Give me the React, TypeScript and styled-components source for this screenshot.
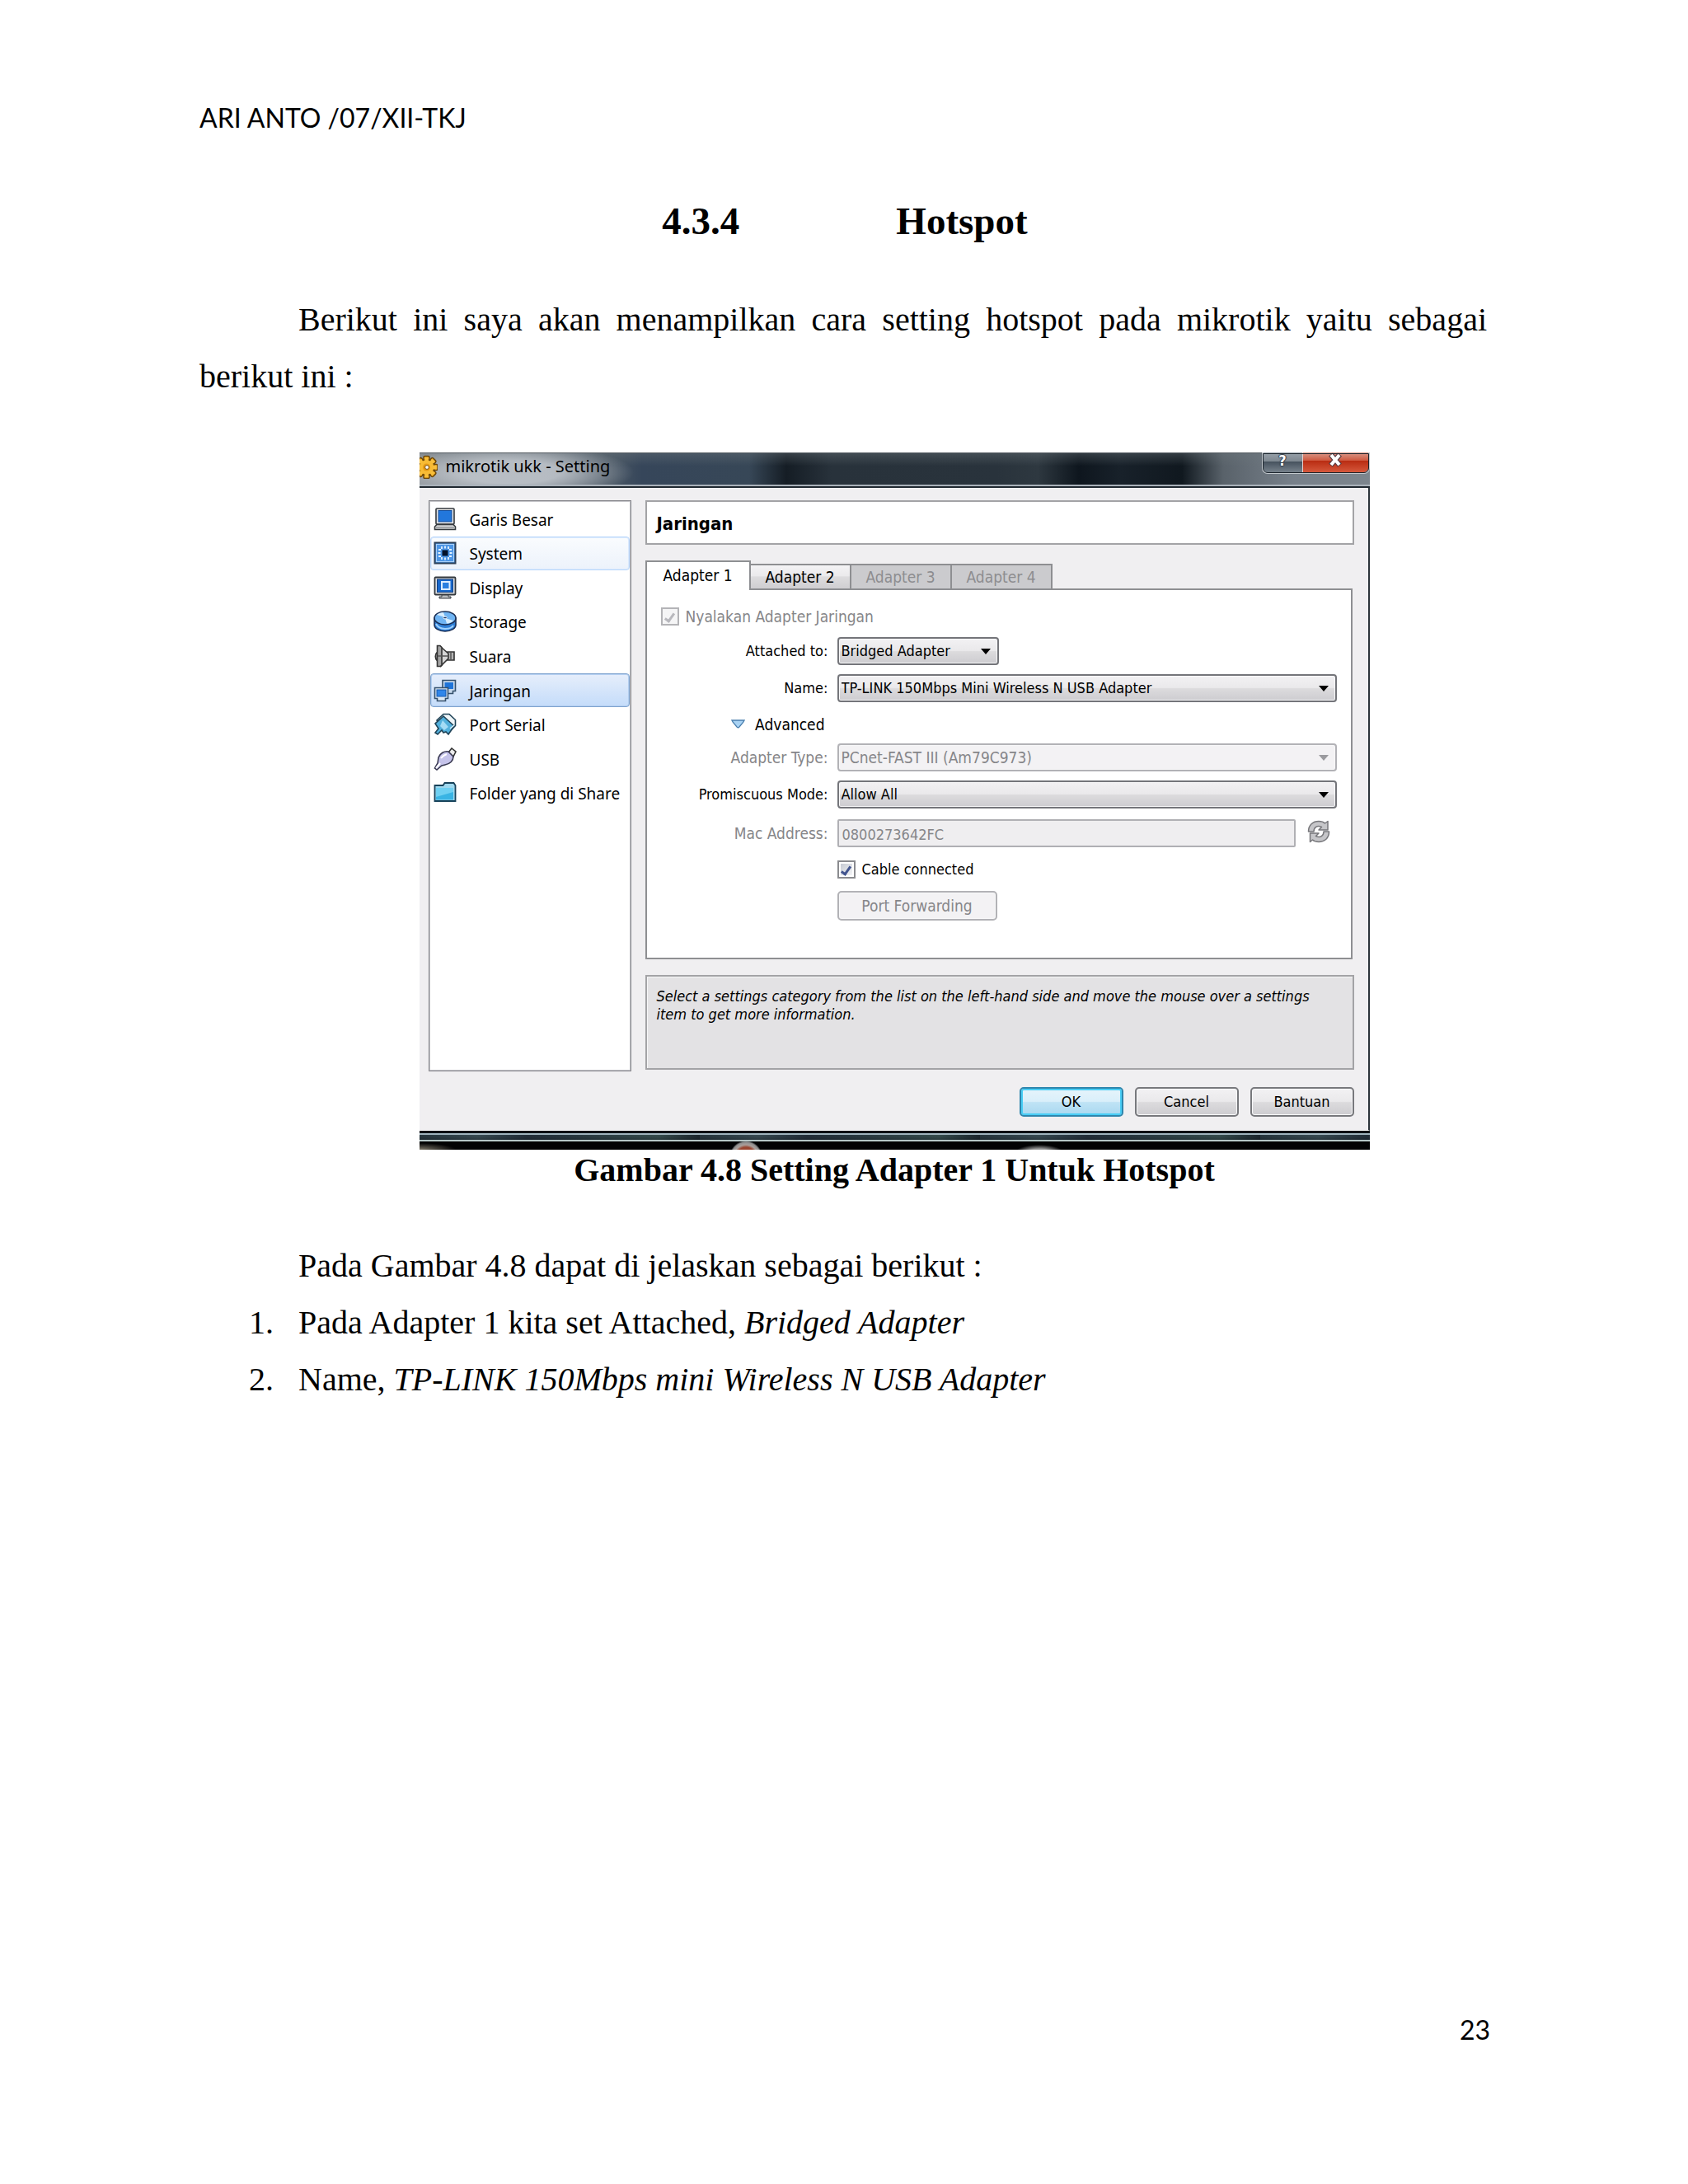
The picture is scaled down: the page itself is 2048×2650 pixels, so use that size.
import React from "react";
import styled, { createGlobalStyle, css } from "styled-components";

const uiFont = `"DejaVu Sans Condensed", "DejaVu Sans", sans-serif`;
const shellFont = `"Noto Sans", "Open Sans", sans-serif`;

const GlobalStyle = createGlobalStyle`
  *, *::before, *::after { box-sizing: border-box; }
  body { margin: 0; background: #fff; color: #000; }
`;

/* ---------- document ---------- */

const Page = styled.div`
  display: flex;
  flex-direction: column;
  min-height: 100vh;
  padding: 120px 240px 120px 242px;
  font: 40px/69px "Liberation Serif", "Times New Roman", serif;
`;

const PageHeader = styled.header`
  font: 32px/46px Lato, sans-serif;
`;

const PageFooter = styled.footer`
  margin-top: auto;
  text-align: right;
  font: 32px/46px Lato, sans-serif;
  padding-bottom: 44px;
`;

const SectionTitle = styled.h1`
  display: flex;
  justify-content: center;
  gap: 190px;
  margin: 62px 0 45px;
  font-size: 47px;
  line-height: 80px;
  font-weight: bold;
`;

const Paragraph = styled.p`
  margin: 0;
  padding-right: 4px;
  text-indent: 120px;
  text-align: justify;
`;

const Figure = styled.figure`
  display: flex;
  flex-direction: column;
  align-items: center;
  margin: 58px 0 56px;
  padding-left: 120px;
`;

const Caption = styled.figcaption`
  line-height: 50px;
  font-weight: bold;
`;

const Steps = styled.ol`
  margin: 0;
  padding-left: 120px;
  list-style: none;
  counter-reset: step;
`;

const Step = styled.li`
  display: flex;
  counter-increment: step;

  &::before {
    content: counter(step) ".";
    width: 60px;
    margin-left: -60px;
    flex: none;
  }
`;

/* ---------- dialog window ---------- */

const Window = styled.section`
  width: 100%;
  max-width: 1153px;
  background: #f0eff1;
  font: 18px/22px ${uiFont};
`;

const TitleBar = styled.div`
  display: flex;
  align-items: flex-start;
  height: 43px;
  border-bottom: 2px solid #1f2830;
  box-shadow: inset 0 -2px 0 #aab2ba, inset 0 1px 0 #555c62;
  background:
    radial-gradient(ellipse 150px 34px at 110px 24px, rgba(200, 205, 211, 0.8) 40%, rgba(150, 160, 170, 0) 100%),
    linear-gradient(180deg, rgba(110, 120, 125, 0.4), rgba(0, 0, 0, 0) 40%),
    linear-gradient(90deg, #8c9298 0, #6f7882 150px, #4a5764 230px, #36465a 270px, #374757 400px, #151d25 445px,
      #28323b 500px, #29333c 700px, #2e3840 750px, #0e161e 800px, #18212a 850px, #10181f 925px, #59626a 975px, #77808a 1060px, #7c858d 100%);
`;

const TitleText = styled.h2`
  flex: 1;
  margin: 0 0 0 10px;
  padding-top: 4px;
  font: 20px/26px ${shellFont};
`;

const WindowControls = styled.div`
  display: flex;
  height: 26px;
  border: 2px solid #c3c9ce;
  border-top: 0;
  border-radius: 0 0 7px 7px;
  outline: 1px solid #1b242c;
  outline-offset: -2px;
`;

const WindowControl = styled.button<{ $close?: boolean }>`
  display: flex;
  align-items: flex-start;
  justify-content: center;
  width: ${(p) => (p.$close ? 80 : 47)}px;
  padding: 0;
  border: 0;
  border-left: ${(p) => (p.$close ? "1px solid #e8d0cc" : "0")};
  border-radius: ${(p) => (p.$close ? "0 0 5px 0" : "0 0 0 5px")};
  background: ${(p) =>
    p.$close
      ? "linear-gradient(#d99a8c 0, #cf5a42 40%, #b92c12 42%, #d5583c 100%)"
      : "linear-gradient(#9aa3ab 0, #7d8790 45%, #46525e 47%, #77828c 100%)"};
`;

const Body = styled.div`
  display: flex;
  flex-direction: column;
  padding: 15px 17px 16px 11px;
  border-right: 2px solid #2c343a;
  border-bottom: 1px solid #fff;
`;

const Columns = styled.div`
  display: flex;
  align-items: flex-start;
  gap: 17px;
`;

const CategoryList = styled.ul`
  display: grid;
  grid-auto-rows: 1fr;
  flex: none;
  width: 246px;
  height: 693px;
  margin: 0;
  padding: 1px 1px 316px;
  border: 1px solid #84848a;
  box-shadow: inset 0 0 0 1px #c4c4c8;
  background: #fff;
  list-style: none;
`;

const Category = styled.li<{ $state?: "hover" | "selected" }>`
  display: flex;
  border: 1px solid transparent;
  border-radius: 4px;
  ${(p) =>
    p.$state === "hover" &&
    css`
      border-color: #b8d6fb;
      background: linear-gradient(#fafcfe, #ecf2fb);
      box-shadow: inset 0 0 0 1px #dbeafd;
    `}
  ${(p) =>
    p.$state === "selected" &&
    css`
      border-color: #7da2ce;
      background: linear-gradient(#e6eefb, #c4dcfa);
      box-shadow: inset 0 0 0 1px #b4cff0;
    `}
`;

const CategoryButton = styled.button`
  display: flex;
  align-items: center;
  gap: 16px;
  width: 100%;
  padding: 0 0 0 3px;
  border: 0;
  background: none;
  color: #000;
  font: 19px/24px ${shellFont};
  white-space: nowrap;

  span {
    padding-top: 2px;
  }
`;

const Settings = styled.div`
  flex: 1;
  min-width: 0;
`;

const PanelTitle = styled.h3`
  margin: 0 0 19px;
  padding: 15px 12px 11px;
  border: 2px solid #a3a3a6;
  background: #fff;
  font: bold 22px/24px ${uiFont};
`;

const Tabs = styled.div`
  display: flex;
  align-items: flex-end;
  height: 34px;
`;

const Tab = styled.button<{ $active?: boolean }>`
  height: ${(p) => (p.$active ? 36 : 30)}px;
  width: ${(p) => (p.$active ? 128 : 122)}px;
  margin-bottom: ${(p) => (p.$active ? -2 : 0)}px;
  position: relative;
  padding: 0;
  padding-bottom: ${(p) => (p.$active ? 2 : 0)}px;
  border: 2px solid #8e8f92;
  border-bottom: 0;
  background: ${(p) => (p.$active ? "#fff" : "linear-gradient(#f4f3f5 0, #ebeaec 45%, #dddcde 50%, #cfced1 100%)")};
  color: #000;
  font: 19px/22px ${uiFont};

  & + & {
    border-left-width: 0;
  }
  &:disabled {
    background: #cbcbce;
    color: #8d8d90;
  }
`;

const TabPanel = styled.div`
  height: 450px;
  padding: 21px 17px;
  border: 2px solid #8e8f92;
  background: #fff;
  margin-right: 2px;
`;

const CheckLabel = styled.label<{ $muted?: boolean }>`
  display: flex;
  align-items: center;
  align-self: start;
  gap: 8px;
  height: 22px;
  font-size: ${(p) => (p.$muted ? 19 : 18)}px;
  color: ${(p) => (p.$muted ? "#868689" : "#000")};
`;

const CheckBox = styled.input`
  appearance: none;
  width: 22px;
  height: 22px;
  margin: 0;
  border: 2px solid #8a8b8f;
  background: linear-gradient(135deg, #c6cbd3, #f4f5f7) content-box #f4f4f5;
  padding: 2px;
  display: grid;
  place-items: center;

  &::after {
    content: "";
    width: 7px;
    height: 13px;
    border: solid #42558f;
    border-width: 0 3px 3px 0;
    transform: rotate(35deg);
  }
  &:disabled {
    border-color: #b4b4b7;
    background: #f5f5f6;
  }
  &:disabled::after {
    border-color: #b8b8bd;
  }
`;

const FormGrid = styled.div`
  display: grid;
  grid-template-columns: 203px 1fr;
  grid-template-rows: 45px 50px 34px 45px 47px 50px 37px 36px;
  column-gap: 11px;
  padding-top: 14px;
`;

const FieldLabel = styled.label<{ $muted?: boolean }>`
  justify-self: end;
  height: 34px;
  line-height: 34px;
  white-space: nowrap;
  font-size: ${(p) => (p.$muted ? 19 : 18)}px;
  color: ${(p) => (p.$muted ? "#868689" : "#000")};
`;

const SelectBox = styled.div<{ $short?: boolean; $muted?: boolean }>`
  position: relative;
  width: ${(p) => (p.$short ? "196px" : "auto")};
  height: 34px;

  &::after {
    content: "";
    position: absolute;
    right: 10px;
    top: 14px;
    border: 6px solid transparent;
    border-top: 7px solid ${(p) => (p.$muted ? "#9a9a9e" : "#000")};
    border-bottom: 0;
    pointer-events: none;
  }
`;

const Select = styled.select`
  appearance: none;
  width: 100%;
  height: 34px;
  padding: 0 30px 0 3px;
  border: 2px solid #74757a;
  border-radius: 4px;
  box-shadow: inset 0 0 0 1px #f7f7f8;
  background: linear-gradient(#f2f1f3 0, #eae9eb 48%, #dcdbdd 52%, #cdccd0 100%);
  color: #000;
  font: 18px/22px ${uiFont};

  &:disabled {
    border-color: #b2b2b6;
    background: #f3f2f4;
    color: #868689;
    font-size: 19px;
    opacity: 1;
  }
`;

const MacRow = styled.div`
  display: flex;
  align-items: flex-start;
  gap: 14px;
`;

const MacInput = styled.input`
  flex: 1;
  min-width: 0;
  height: 34px;
  padding: 2px 4px 0;
  border: 2px solid #b0b0b4;
  border-radius: 2px;
  background: #efeef0;
  color: #868689;
  font: 18px/22px ${uiFont};
`;

const RefreshButton = styled.button`
  width: 28px;
  height: 30px;
  margin-right: 8px;
  padding: 0;
  border: 0;
  background: none;
`;

const AdvancedToggle = styled.button`
  display: flex;
  align-items: center;
  justify-self: end;
  gap: 12px;
  height: 22px;
  margin-right: 4px;
  padding: 0;
  border: 0;
  background: none;
  color: #000;
  font: 19px/22px ${uiFont};
`;

const PushButton = styled.button<{ $primary?: boolean }>`
  width: 126px;
  height: 36px;
  padding: 0;
  border: 2px solid ${(p) => (p.$primary ? "#2f86ad" : "#77787c")};
  border-radius: 5px;
  box-shadow: inset 0 0 0 ${(p) => (p.$primary ? "2px #48cdf5" : "1px #f8f8f9")};
  background: ${(p) =>
    p.$primary
      ? "linear-gradient(#e6f4fb 0, #d9effa 48%, #bfe3f5 52%, #a9d8f0 100%)"
      : "linear-gradient(#f2f1f3 0, #eae9eb 48%, #dcdbdd 52%, #cdccd0 100%)"};
  color: #000;
  font: 18px/22px ${uiFont};

  &:disabled {
    width: 194px;
    border-color: #b2b2b6;
    background: #f3f2f4;
    color: #868689;
    font-size: 19px;
  }
`;

const Hint = styled.p`
  height: 115px;
  margin: 19px 0 0;
  padding: 13px 12px;
  border: 2px solid #a3a3a6;
  box-shadow: inset 1px 1px 0 #f6f6f7;
  background: #e3e2e4;
  font-style: italic;
`;

const Actions = styled.div`
  display: flex;
  justify-content: flex-end;
  gap: 14px;
  margin-top: 19px;
`;

const BottomFrame = styled.div`
  height: 13px;
  border-top: 3px solid #0a1014;
  box-shadow: inset 0 2px 0 #9fb3bd, inset 0 -2px 0 #b5c6c6;
  background:
    linear-gradient(rgba(10, 16, 22, 0), rgba(10, 16, 22, 0.5)),
    repeating-linear-gradient(90deg, #2b3c44 0, #3f545c 70px, #26333f 130px, #3c5656 290px, #1e2a32 340px);
`;

const Desktop = styled.div`
  height: 10px;
  background:
    radial-gradient(circle at 396px 19px, #9a4630 12px, #a9a09c 15px, #8d8d8d 18px, transparent 20px),
    radial-gradient(ellipse 30px 10px at 752px 14px, #9a9a9a 50%, transparent 100%),
    radial-gradient(ellipse 44px 8px at 0 10px, #7d7768, transparent 100%),
    #020203;
`;

/* ---------- drawings ---------- */

const Icon = styled.svg`
  display: block;
  flex: none;
  width: 28px;
  height: 28px;
`;

const GearIcon = () => (
  <svg width="22" height="32" viewBox="8 -3 22 32" aria-hidden="true">
    <g fill="#f2ae22" stroke="#6d4708" strokeWidth="1.5">
      {[0, 45, 90, 135, 180, 225, 270, 315].map((a) => (
        <rect key={a} x="13" y="1.5" width="7" height="6" rx="1.5" transform={`rotate(${a} 16.5 15)`} />
      ))}
      <circle cx="16.5" cy="15" r="9.5" />
    </g>
    {[0, 45, 90, 135, 180, 225, 270, 315].map((a) => (
      <rect key={a} x="14.2" y="3" width="4.600" height="6" fill="#f8bf3c" transform={`rotate(${a} 16.5 15)`} />
    ))}
    <circle cx="16.5" cy="15" r="8.500" fill="#f7bb35" />
    <circle cx="16.5" cy="15" r="4.5" fill="#e59a14" />
    <circle cx="17" cy="15" r="2.4" fill="#fff" stroke="#7a5010" />
  </svg>
);

const GeneralIcon = () => (
  <Icon viewBox="0 0 28 28" aria-hidden="true">
    <rect x="3" y="1" width="22" height="19" rx="1" fill="#e4e6e8" stroke="#34393e" strokeWidth="1.6" />
    <rect x="6" y="3.5" width="16" height="13.5" fill="#2277dc" stroke="#164f9c" />
    <path d="M4 20.5h20l2.5 2.5v3.5h-25V23z" fill="#d5d7d9" stroke="#34393e" strokeWidth="1.6" />
    <path d="M3 24h22" stroke="#70757a" />
  </Icon>
);

const SystemIcon = () => (
  <Icon viewBox="0 0 28 28" aria-hidden="true">
    <rect x="1.5" y="1.5" width="25" height="25" fill="#4d96e6" stroke="#2c4058" strokeWidth="2" />
    <rect x="3.5" y="3.5" width="21" height="21" fill="none" stroke="#a9d0f8" />
    <path
      d="M10 6v3M14 5.500v3M18 6v3M10 19v3M14 19.500v3M18 19v3M6 10h3M5.500 14h3M6 18h3M19 10h3M19.500 14h3M19 18h3"
      stroke="#e4f2ff"
      strokeWidth="1.8"
    />
    <rect x="10.5" y="10.5" width="7" height="7" fill="#04122a" />
  </Icon>
);

const DisplayIcon = () => (
  <Icon viewBox="0 0 28 28" aria-hidden="true">
    <rect x="1.5" y="1.5" width="25" height="21" rx="1" fill="#dfe2e5" stroke="#34393e" strokeWidth="1.8" />
    <rect x="4.5" y="4" width="19" height="15.5" fill="#1868cc" stroke="#123f80" />
    <rect x="10" y="7" width="9.5" height="9" fill="#2a7fe0" stroke="#dcecff" strokeWidth="2" />
    <path d="M10 23h8v2h3v2H7v-2h3z" fill="#b9bcbf" stroke="#34393e" />
  </Icon>
);

const StorageIcon = () => (
  <Icon viewBox="0 0 28 28" aria-hidden="true">
    <path d="M1 10v8c0 4.500 5.800 8 13 8s13-3.500 13-8v-8z" fill="#2f7fd6" stroke="#1a2f55" strokeWidth="1.6" />
    <path d="M3 17c2 4 6 6 11 6s8-1 10-4" fill="none" stroke="#9fd2ff" strokeWidth="2" />
    <ellipse cx="14" cy="10" rx="13" ry="8" fill="#6fb4f3" stroke="#1a2f55" strokeWidth="1.6" />
    <path d="M14 9L4 6c2-2 5-3 8-3zM14 10l10 3c-2 2-5 3.500-8 3.500z" fill="#d8eeff" />
    <ellipse cx="14" cy="9.500" rx="2.200" ry="1.400" fill="#14386e" stroke="#fff" />
  </Icon>
);

const AudioIcon = () => (
  <Icon viewBox="0 0 28 28" aria-hidden="true">
    <path d="M17 9h8v10h-8z" fill="#b4b4b4" stroke="#333" strokeWidth="1.6" />
    <path d="M9 3l9 8v6l-9 9z" fill="#d6d6d6" stroke="#333" strokeWidth="1.6" />
    <path d="M4.500 1.500H8l2 2v22l-2 1H4.500zM4.500 9c-3 3-3 8 0 11" fill="#a4a4a4" stroke="#333" strokeWidth="1.6" />
    <path d="M5 14h12M21 9v10" stroke="#555" strokeWidth="1.500" />
  </Icon>
);

const NetworkIcon = () => (
  <Icon viewBox="0 0 28 28" aria-hidden="true">
    <path d="M11 1.500h15.500v13h-3v3h-9v-3H11z" fill="#c6d8ec" stroke="#34506c" strokeWidth="1.6" />
    <rect x="13.500" y="4" width="10.500" height="8" fill="#1f74d8" />
    <path d="M1.500 10.500h16v13h-3v3h-10v-3h-3z" fill="#dbe8f5" stroke="#34506c" strokeWidth="1.6" />
    <rect x="4" y="13" width="11" height="8" fill="#2f86ea" stroke="#1659ae" />
  </Icon>
);

const SerialIcon = () => (
  <Icon viewBox="0 0 28 28" aria-hidden="true">
    <path d="M12 1.500h7l7.500 7v7l-8 8L4 9z" fill="#eef5f8" stroke="#1f4256" strokeWidth="1.600" />
    <path d="M12 4l13 12-7 10-3-3-3 1-2-3-5 5-3-2 4-5-4-6z" fill="#52b0dc" stroke="#1f4256" strokeWidth="1.600" />
    <path d="M11 9l7 8-5 4-5-5z" fill="#a4dcf5" />
    <path d="M20 19l5-4" stroke="#dff3fb" strokeWidth="1.500" />
  </Icon>
);

const UsbIcon = () => (
  <Icon viewBox="0 0 28 28" aria-hidden="true">
    <path d="M18 6l4-5 5 4-3 6z" fill="#ececec" stroke="#333" strokeWidth="1.600" />
    <path d="M6 12c2-5 7-8 12-7l6 6c0 5-4 9-10 10l-4 1-6 5-2.500-2L5 19z" fill="#c5c3ea" stroke="#3a3a52" strokeWidth="1.600" />
    <path d="M9 13c2-3 4-4 7-5M3 25l5-6" fill="none" stroke="#fff" strokeWidth="2" />
  </Icon>
);

const FolderIcon = () => (
  <Icon viewBox="0 0 28 28" aria-hidden="true">
    <path d="M1.500 5h10l2-3h11l2 3v19h-25z" fill="#9fd8ee" stroke="#17425a" strokeWidth="1.800" />
    <path d="M3 8h21v14.500H3z" fill="#39b4e4" />
    <path d="M3 8h21v5L3 19z" fill="#6fd0f2" />
  </Icon>
);

const RefreshIcon = () => (
  <Icon viewBox="0 0 28 28" aria-hidden="true">
    <g fill="#c6c6c9" stroke="#77777b" strokeWidth="1.500" strokeLinejoin="round">
      <path d="M1.500 14C1.500 6 7 1.500 14 1.500c3 0 6 1 7.500 2.500L25 1.500v10.500H14l3.500-3.500C12 6 8 9 8 14z" />
      <path d="M26.500 14c0 8-5.500 12.500-12.500 12.500-3 0-6-1-7.500-2.500L3.500 26.500V16H14l-3.500 3.500C16 22 20 19 20 14z" />
    </g>
  </Icon>
);

const CloseGlyph = () => (
  <svg width="18" height="18" viewBox="0 0 18 18" aria-hidden="true">
    <path d="M3.500 2.500l11 13M14.500 2.500l-11 13" stroke="#5a3a40" strokeWidth="6.500" />
    <path d="M4 3l10 12M14 3L4 15" stroke="#fff" strokeWidth="4" />
  </svg>
);

const HelpGlyph = styled.span`
  color: #fff;
  font: bold 18px/20px ${uiFont};
  text-shadow: 1px 0 1px #333c48, -1px 0 1px #333c48, 0 1px 1px #333c48, 0 -1px 1px #333c48;
`;

const ExpandGlyph = () => (
  <svg width="17" height="12" viewBox="0 0 17 12" aria-hidden="true">
    <path d="M1 1h15l-1 2-5 6-1.500 1L7 9 2 3z" fill="#a9d3f4" stroke="#4a7fae" strokeWidth="1.300" />
  </svg>
);

/* ---------- content ---------- */

const categories: { name: string; icon: React.FC; state?: "hover" | "selected" }[] = [
  { name: "Garis Besar", icon: GeneralIcon },
  { name: "System", icon: SystemIcon, state: "hover" },
  { name: "Display", icon: DisplayIcon },
  { name: "Storage", icon: StorageIcon },
  { name: "Suara", icon: AudioIcon },
  { name: "Jaringan", icon: NetworkIcon, state: "selected" },
  { name: "Port Serial", icon: SerialIcon },
  { name: "USB", icon: UsbIcon },
  { name: "Folder yang di Share", icon: FolderIcon },
];

const SettingsWindow = () => (
  <Window aria-label="mikrotik ukk - Setting">
    <TitleBar>
      <GearIcon />
      <TitleText>mikrotik ukk - Setting</TitleText>
      <WindowControls>
        <WindowControl type="button" aria-label="Help">
          <HelpGlyph>?</HelpGlyph>
        </WindowControl>
        <WindowControl type="button" $close aria-label="Close">
          <CloseGlyph />
        </WindowControl>
      </WindowControls>
    </TitleBar>
    <Body>
      <Columns>
        <CategoryList>
          {categories.map(({ name, icon: Glyph, state }) => (
            <Category key={name} $state={state}>
              <CategoryButton type="button">
                <Glyph />
                <span>{name}</span>
              </CategoryButton>
            </Category>
          ))}
        </CategoryList>
        <Settings>
          <PanelTitle>Jaringan</PanelTitle>
          <Tabs role="tablist">
            <Tab type="button" role="tab" aria-selected="true" $active>Adapter 1</Tab>
            <Tab type="button" role="tab">Adapter 2</Tab>
            <Tab type="button" role="tab" disabled>Adapter 3</Tab>
            <Tab type="button" role="tab" disabled>Adapter 4</Tab>
          </Tabs>
          <TabPanel role="tabpanel">
            <CheckLabel $muted>
              <CheckBox type="checkbox" defaultChecked disabled />
              Nyalakan Adapter Jaringan
            </CheckLabel>
            <FormGrid>
              <FieldLabel htmlFor="attached">Attached to:</FieldLabel>
              <SelectBox $short>
                <Select id="attached"><option>Bridged Adapter</option></Select>
              </SelectBox>
              <FieldLabel htmlFor="name">Name:</FieldLabel>
              <SelectBox>
                <Select id="name"><option>TP-LINK 150Mbps Mini Wireless N USB Adapter</option></Select>
              </SelectBox>
              <AdvancedToggle type="button" aria-expanded="true">
                <ExpandGlyph />
                Advanced
              </AdvancedToggle>
              <span />
              <FieldLabel htmlFor="type" $muted>Adapter Type:</FieldLabel>
              <SelectBox $muted>
                <Select id="type" disabled><option>PCnet-FAST III (Am79C973)</option></Select>
              </SelectBox>
              <FieldLabel htmlFor="mode">Promiscuous Mode:</FieldLabel>
              <SelectBox>
                <Select id="mode"><option>Allow All</option></Select>
              </SelectBox>
              <FieldLabel htmlFor="mac" $muted>Mac Address:</FieldLabel>
              <MacRow>
                <MacInput id="mac" defaultValue="0800273642FC" disabled />
                <RefreshButton type="button" aria-label="Refresh" disabled>
                  <RefreshIcon />
                </RefreshButton>
              </MacRow>
              <span />
              <CheckLabel>
                <CheckBox type="checkbox" defaultChecked />
                Cable connected
              </CheckLabel>
              <span />
              <PushButton type="button" disabled>Port Forwarding</PushButton>
            </FormGrid>
          </TabPanel>
          <Hint>
            Select a settings category from the list on the left-hand side and move the mouse over a settings item to
            get more information.
          </Hint>
        </Settings>
      </Columns>
      <Actions>
        <PushButton type="button" $primary>OK</PushButton>
        <PushButton type="button">Cancel</PushButton>
        <PushButton type="button">Bantuan</PushButton>
      </Actions>
    </Body>
    <BottomFrame />
    <Desktop />
  </Window>
);

export default function App() {
  return (
    <>
      <GlobalStyle />
      <Page>
        <PageHeader>ARI ANTO /07/XII-TKJ</PageHeader>
        <main>
          <SectionTitle>
            <span>4.3.4</span>
            <span>Hotspot</span>
          </SectionTitle>
          <Paragraph>
            Berikut ini saya akan menampilkan cara setting hotspot pada mikrotik yaitu sebagai berikut ini :
          </Paragraph>
          <Figure>
            <SettingsWindow />
            <Caption>Gambar 4.8 Setting Adapter 1 Untuk Hotspot</Caption>
          </Figure>
          <Paragraph>Pada Gambar 4.8 dapat di jelaskan sebagai berikut :</Paragraph>
          <Steps>
            <Step>
              <span>Pada Adapter 1 kita set Attached, <em>Bridged Adapter</em></span>
            </Step>
            <Step>
              <span>Name, <em>TP-LINK 150Mbps mini Wireless N USB Adapter</em></span>
            </Step>
          </Steps>
        </main>
        <PageFooter>23</PageFooter>
      </Page>
    </>
  );
}
